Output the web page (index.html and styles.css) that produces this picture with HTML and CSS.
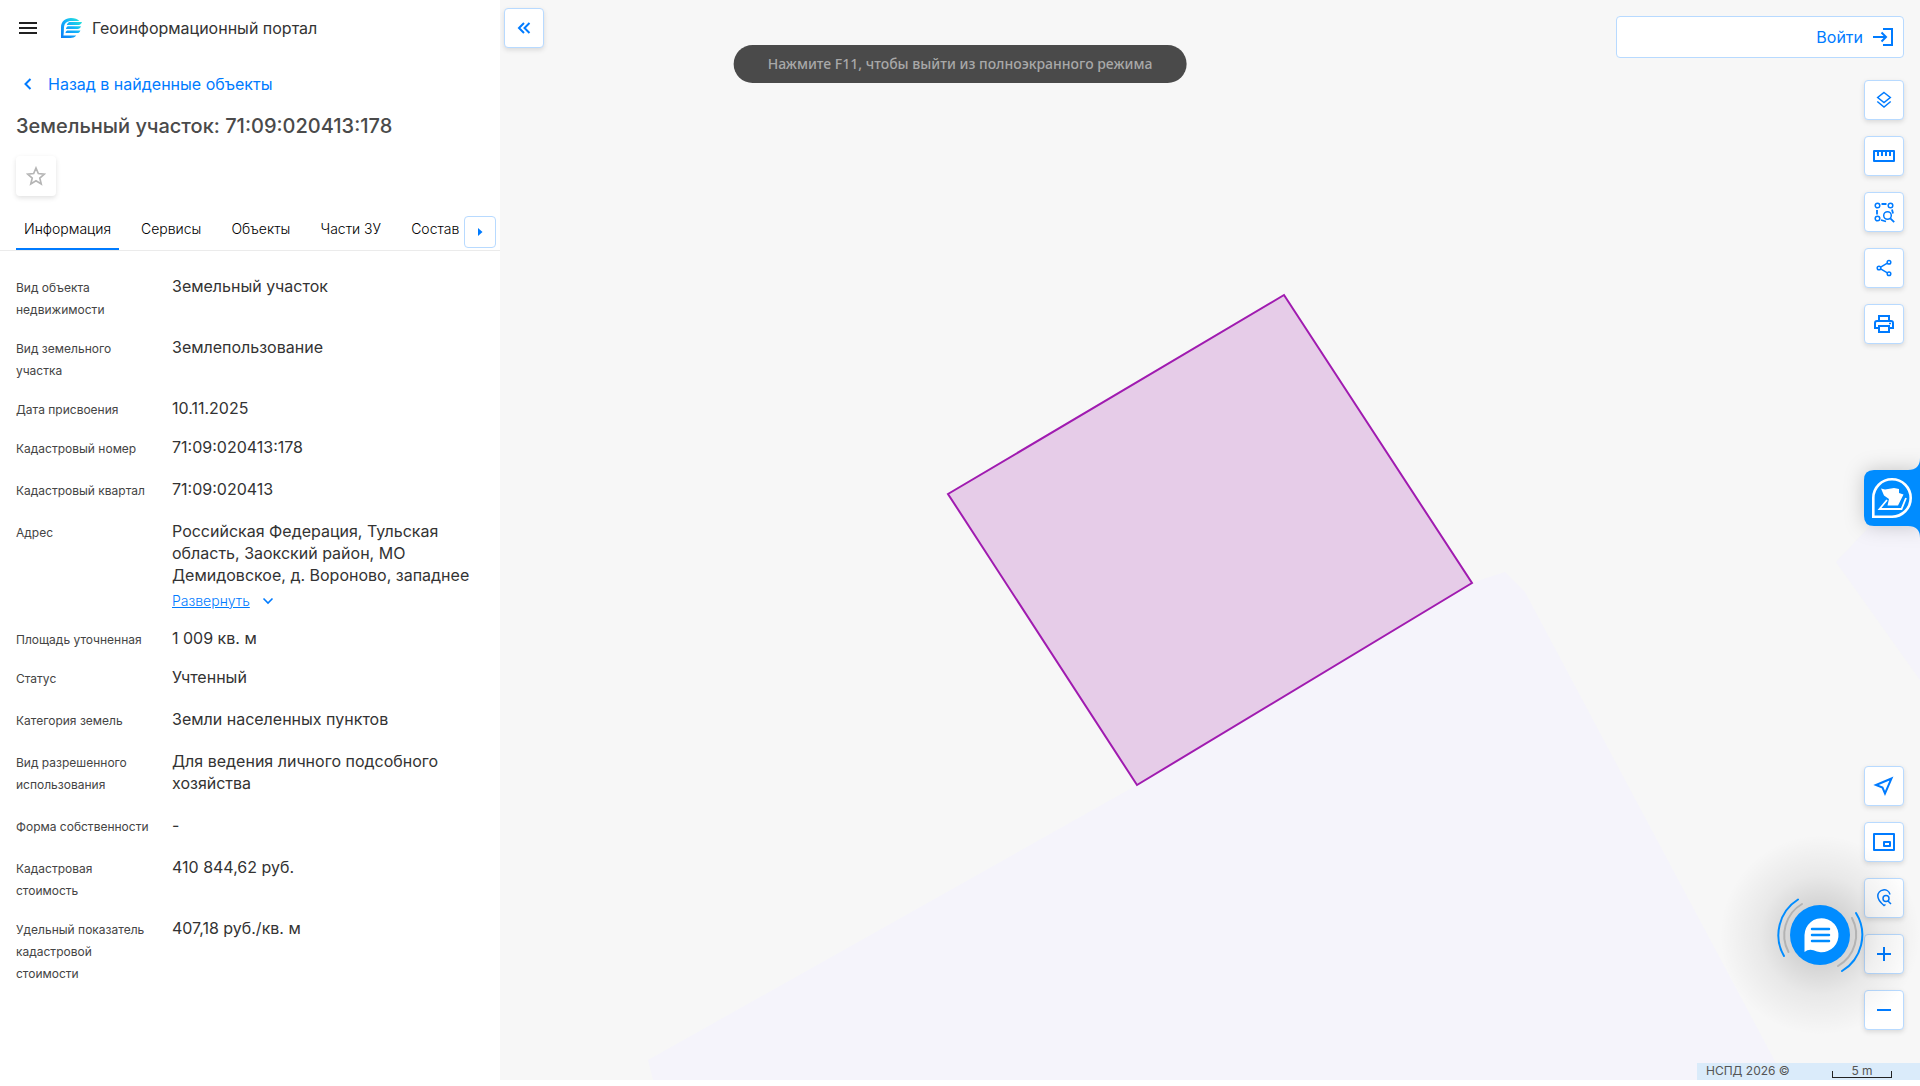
FILE: index.html
```html
<!DOCTYPE html>
<html lang="ru">
<head>
<meta charset="utf-8">
<title>Геоинформационный портал</title>
<link rel="stylesheet" href="styles.css">
</head>
<body>
<div class="app">
  <aside class="panel">
    <header class="brand">
      <button class="menu" aria-label="Меню"><svg width="18" height="14" viewBox="0 0 18 14"><path d="M0 2h18M0 7h18M0 12h18" stroke="#212121" stroke-width="2"/></svg></button>
      <svg class="logo" width="21" height="20" viewBox="0 0 20 20" preserveAspectRatio="none"><defs><linearGradient id="lg" x1="1" y1="0" x2="0" y2="1"><stop offset="0" stop-color="#2df0cf"/><stop offset=".45" stop-color="#12b4fa"/><stop offset="1" stop-color="#0a7cf8"/></linearGradient></defs><path d="M0 20V9.500C0 3.500 4 0 9.500 0c3.600 0 6.500 1 8 3H8.500C5 3.500 3.600 5.500 3 8 2.500 11 3 14 2.300 17.500h12.200C13 19.300 11 20 9 20zM8 4h12c-.6 1.800-1.500 2.700-3.200 3H5.500C6 5.500 6.700 4.500 8 4zM6.500 8.300H19c-.6 1.900-1.500 2.600-3.200 2.800H4.800c0-1.200.6-2.200 1.700-2.800zM6 12.400h12.500c-.7 1.800-1.500 2.500-3.200 2.700H4.300c0-1.200.6-2.200 1.700-2.700z" fill="url(#lg)"/></svg>
      <span>Геоинформационный портал</span>
    </header>
    <a class="back" href="#"><svg width="8" height="12" viewBox="0 0 8 12"><path d="M6.500 1 1.500 6l5 5" fill="none" stroke="#007bff" stroke-width="2"/></svg>Назад в найденные объекты</a>
    <h1 class="title">Земельный участок: 71:09:020413:178</h1>
    <button class="star" aria-label="В избранное"><svg width="20" height="20" viewBox="0 0 18 18"><path d="m9 1.800 2.100 5 5.400.5-4.100 3.500 1.300 5.400L9 13.300l-4.700 2.900 1.300-5.400L1.500 7.300l5.400-.5z" fill="none" stroke="#b5b5b5" stroke-width="1.500"/></svg></button>
    <nav class="tabs">
      <div class="tab-list">
        <button class="tab active">Информация</button>
        <button class="tab">Сервисы</button>
        <button class="tab">Объекты</button>
        <button class="tab">Части ЗУ</button>
        <button class="tab">Состав</button>
      </div>
      <button class="tab-next" aria-label="Далее"><svg width="5" height="8" viewBox="0 0 5 8"><path d="M0 0l4.500 4L0 8z" fill="#007bff"/></svg></button>
    </nav>
    <dl class="props">
      <div class="row tight"><dt>Вид объекта недвижимости</dt><dd>Земельный участок</dd></div>
      <div class="row tight"><dt>Вид земельного участка</dt><dd>Землепользование</dd></div>
      <div class="row tight"><dt>Дата присвоения</dt><dd>10.11.2025</dd></div>
      <div class="row"><dt>Кадастровый номер</dt><dd>71:09:020413:178</dd></div>
      <div class="row"><dt>Кадастровый квартал</dt><dd>71:09:020413</dd></div>
      <div class="row tight"><dt>Адрес</dt><dd>Российская Федерация, Тульская область, Заокский район, МО Демидовское, д. Вороново, западнее <a class="expand" href="#"><span>Развернуть</span><svg width="12" height="8" viewBox="0 0 12 8"><path d="M1.500 1.500 6 6l4.500-4.500" fill="none" stroke="#007bff" stroke-width="1.600"/></svg></a></dd></div>
      <div class="row tight"><dt>Площадь уточненная</dt><dd>1 009 кв. м</dd></div>
      <div class="row"><dt>Статус</dt><dd>Учтенный</dd></div>
      <div class="row"><dt>Категория земель</dt><dd>Земли населенных пунктов</dd></div>
      <div class="row"><dt>Вид разрешенного использования</dt><dd>Для ведения личного подсобного хозяйства</dd></div>
      <div class="row"><dt>Форма собственности</dt><dd>-</dd></div>
      <div class="row tight"><dt>Кадастровая стоимость</dt><dd>410 844,62 руб.</dd></div>
      <div class="row"><dt>Удельный показатель кадастровой стоимости</dt><dd>407,18 руб./кв. м</dd></div>
    </dl>
  </aside>

  <main class="map">
    <svg class="canvas" viewBox="500 0 1420 1080" preserveAspectRatio="xMidYMid slice">
      <path d="M653 1080 648 1060 1137 785 1480 580 1505 572 1525 592 1640 808 1785 1080z" fill="#f5f4fb"/>
      <path d="M1836 562 1870 526 1920 505V680z" fill="#f5f4fb"/>
      <path d="M1284 295 1472 583 1137 785 948 494z" fill="#e6cce8" stroke="#a01bb0" stroke-width="2"/>
    </svg>
    <button class="tool collapse" aria-label="Свернуть"><svg width="14" height="12" viewBox="0 0 14 12"><path d="M7 1 2 6l5 5M12.500 1 7.500 6l5 5" fill="none" stroke="#007bff" stroke-width="2"/></svg></button>
    <button class="login">Войти<svg width="20" height="18" viewBox="0 0 20 18"><path d="M10 1h9v16h-9M0 9h13M8.500 4.500 13 9l-4.500 4.500" fill="none" stroke="#007bff" stroke-width="2"/></svg></button>
    <div class="tools top">
      <button class="tool" aria-label="Слои"><svg width="24" height="24" viewBox="0 0 24 24"><path d="m12 4.500 6.300 5L12 14.500l-6.300-5zM5.300 13.500 12 19l6.700-5.500"/></svg></button>
      <button class="tool" aria-label="Линейка"><svg width="24" height="24" viewBox="0 0 24 24"><path d="M2 7h20v10H2zM6 7v5M10 7v5M14 7v5M18 7v5" stroke-width="2" stroke-linejoin="round"/></svg></button>
      <button class="tool" aria-label="Поиск по области"><svg width="24" height="24" viewBox="0 0 24 24"><circle cx="5.500" cy="5.500" r="2.300"/><circle cx="18.500" cy="5.500" r="2.300"/><circle cx="5.500" cy="18.500" r="2.300"/><circle cx="15.500" cy="15.500" r="3.800"/><path d="m18.300 18.300 3.900 3.900M9.500 4h5M5 10v4.500M20 9.500l1 4M9 20l5 1.500" stroke-width="1.800"/></svg></button>
      <button class="tool" aria-label="Поделиться"><svg width="24" height="24" viewBox="0 0 24 24"><circle cx="7" cy="12" r="1.800"/><circle cx="17" cy="6.300" r="1.800"/><circle cx="17" cy="17.700" r="1.800"/><path d="M8.600 11.100l6.800-3.900M8.600 12.900l6.800 3.900"/></svg></button>
      <button class="tool" aria-label="Печать"><svg width="24" height="24" viewBox="0 0 24 24"><path d="M7 9V4h10v5M7 16H3v-5q0-2 2-2h14q2 0 2 2v5h-4M7 14h10v6H7z" stroke-width="2"/><path d="M17 11.500h2"/></svg></button>
    </div>
    <button class="assist" aria-label="Помощник"><svg width="56" height="80" viewBox="0 0 56 80"><path d="M56 0q0 12-12 12H10Q0 12 0 22V58q0 10 10 10H44q12 0 12 12z" fill="#008cff"/><path d="M9.300 58.700V40A18.700 18.700 0 1 1 28 58.700z" fill="none" stroke="#fff" stroke-width="2.600"/><path d="m17 30.500 4 1 9-1.500 5 1v4l4.500 1.500L34 47.500H23.500l1.500-6.500-5-3.500z" fill="#fff"/><path d="m23 42-7.500 9h22l4.500-11" fill="none" stroke="#fff" stroke-width="1.800"/></svg></button>
    <div class="tools bottom">
      <button class="tool" aria-label="Моё местоположение"><svg width="24" height="24" viewBox="0 0 24 24"><path d="M19.500 4.500 4 11l6.500 2.500L13 19.500z" stroke-width="2"/></svg></button>
      <button class="tool" aria-label="Обзорная карта"><svg width="24" height="24" viewBox="0 0 24 24"><path d="M2 4h20v16H2zM12 12h6v4h-6z" stroke-width="2" stroke-linejoin="round"/></svg></button>
      <button class="tool" aria-label="Поиск по точке"><svg width="24" height="24" viewBox="0 0 24 24"><path d="M18 8.500A6.200 6.200 0 0 0 5.800 10C5.800 14 9 17 12 19.500l1.500-1"/><circle cx="14" cy="12.500" r="3"/><path d="M16 15l3 3"/></svg></button>
      <button class="tool" aria-label="Приблизить"><svg width="24" height="24" viewBox="0 0 24 24"><path d="M12 5v14M5 12h14" stroke-width="2"/></svg></button>
      <button class="tool" aria-label="Отдалить"><svg width="24" height="24" viewBox="0 0 24 24"><path d="M5 12h14" stroke-width="2"/></svg></button>
    </div>
    <button class="chat" aria-label="Чат"><svg width="90" height="90" viewBox="0 0 90 90"><g fill="none" stroke-width="2" stroke-linecap="round"><path d="M23 9.500A42 42 0 0 0 9 66M81 23A42 42 0 0 1 67 81" stroke="#008cff"/><path d="M27 14A36 36 0 0 0 13.500 62M77 28A36 36 0 0 1 63 76" stroke="#b3b3b3"/></g><circle cx="45" cy="45" r="30" fill="#008cff"/><path d="M29.500 62V45a17 17 0 1 1 9 15.200q-5-1.500-9 1.800z" fill="#fff"/><path d="M37 39h17M37 45h17M37 51h17" stroke="#008cff" stroke-width="2.500" stroke-linecap="round"/></svg></button>
    <footer class="status"><span>НСПД 2026 ©</span><span class="scale">5 m</span></footer>
  </main>
</div>
<div class="toast" role="status">Нажмите F11, чтобы выйти из полноэкранного режима</div>
</body>
</html>
```
FILE: styles.css
```css
* { box-sizing: border-box; }

body {
  margin: 0;
  background: #fff;
  font-family: Inter, "Noto Sans", sans-serif;
  color: #333;
}

button {
  font: inherit;
  color: inherit;
  border: 0;
  background: none;
  padding: 0;
  cursor: pointer;
}

a { color: #007bff; text-decoration: none; }

svg { display: block; flex: none; }

.app {
  display: flex;
  height: calc(100vh - 6px);
}

/* Side panel */

.panel {
  width: 500px;
  flex: none;
  background: #fff;
  overflow: hidden;
}

.brand {
  display: flex;
  align-items: center;
  height: 56px;
  padding-left: 19px;
  font-size: 16px;
}

.logo { margin: 0 10px 0 24px; }

.back {
  display: flex;
  align-items: center;
  gap: 16px;
  height: 56px;
  padding-left: 24px;
  font-size: 16px;
}

.title {
  margin: 0;
  padding-left: 16px;
  font-size: 20px;
  line-height: 28px;
  font-weight: 500;
  color: #4a4a4a;
}

.star {
  display: flex;
  align-items: center;
  justify-content: center;
  width: 40px;
  height: 40px;
  margin: 16px 0 0 16px;
  border-radius: 4px;
  box-shadow: 0 2px 5px rgba(0, 0, 0, .12);
}

.tabs {
  display: flex;
  height: 55px;
  padding-left: 16px;
  border-bottom: 1px solid #ebebeb;
}

.tab-list {
  display: flex;
  gap: 14px;
  width: 448px;
}

.tab {
  padding: 12px 8px 0;
  border-bottom: 2px solid transparent;
  font-size: 14px;
  font-weight: 300;
  color: #000;
  white-space: nowrap;
}

.tab.active { border-color: #007bff; }

.tab-next {
  display: flex;
  align-items: center;
  justify-content: center;
  width: 32px;
  height: 32px;
  margin-top: 20px;
  border: 1px solid #b8daff;
  border-radius: 4px;
}

.props { margin: 0; padding: 24px 16px; }

.row { display: flex; padding-bottom: 20px; }

.row.tight { padding-bottom: 17px; }

dt {
  width: 136px;
  flex: none;
  margin-right: 20px;
  position: relative;
  top: 2px;
  font-size: 12px;
  line-height: 22px;
  color: #444;
}

dd {
  margin: 0;
  font-size: 16px;
  line-height: 22px;
}

.expand {
  display: flex;
  align-items: center;
  gap: 12px;
  height: 24px;
  padding-top: 6px;
  font-size: 14px;
  font-weight: 300;
}

.expand span { text-decoration: underline; }

/* Map and the controls lying over it */

.map {
  position: relative;
  flex: 1;
  overflow: hidden;
  background: #f7f7f7;
}

.canvas {
  position: absolute;
  inset: 0;
  width: 100%;
  height: 100%;
}

.tool {
  display: flex;
  align-items: center;
  justify-content: center;
  width: 40px;
  height: 40px;
  background: #fff;
  border: 1px solid #b8daff;
  border-radius: 4px;
  box-shadow: 0 2px 5px rgba(0, 0, 0, .12);
}

.tools {
  position: absolute;
  right: 16px;
  display: flex;
  flex-direction: column;
  gap: 16px;
}

.tools.top { top: 80px; }

.tools.bottom { bottom: 50px; }

.tools .tool svg { fill: none; stroke: #007bff; stroke-width: 1.5px; }

.collapse { position: absolute; left: 4px; top: 8px; }

.login {
  position: absolute;
  top: 16px;
  right: 16px;
  display: flex;
  align-items: center;
  justify-content: flex-end;
  gap: 10px;
  width: 288px;
  height: 42px;
  padding: 0 10px;
  background: #fff;
  border: 1px solid #b8daff;
  border-radius: 4px;
  font-size: 16px;
  color: #007bff;
}

.assist {
  position: absolute;
  top: 458px;
  right: 0;
  filter: drop-shadow(0 0 10px rgba(0, 0, 0, .2));
}

.chat {
  position: absolute;
  right: 55px;
  bottom: 100px;
  border-radius: 50%;
}

.chat::before {
  content: "";
  position: absolute;
  inset: -55px;
  border-radius: 50%;
  background: radial-gradient(closest-side, rgba(0, 0, 0, .14) 30%, rgba(0, 0, 0, .06) 60%, rgba(0, 0, 0, 0) 100%);
  pointer-events: none;
}

.chat svg { position: relative; }

.status {
  position: absolute;
  right: 0;
  bottom: 0;
  display: flex;
  justify-content: space-between;
  width: 223px;
  padding: 1px 28px 2px 9px;
  background: #daebfa;
  font-size: 12px;
  line-height: 14px;
  color: #555;
}

.scale {
  position: relative;
  width: 60px;
  text-align: center;
}

.scale::after {
  content: "";
  position: absolute;
  left: 0;
  right: 0;
  bottom: 0;
  height: 6px;
  border: 1px solid #222;
  border-top: 0;
}

.toast {
  position: fixed;
  top: 45px;
  left: 50%;
  transform: translateX(-50%);
  padding: 0 34px;
  border-radius: 19px;
  background: #4a4a4a;
  font-family: "Noto Sans", sans-serif;
  font-size: 14px;
  font-weight: 500;
  line-height: 38px;
  color: #a8a8a8;
  white-space: nowrap;
}
```
